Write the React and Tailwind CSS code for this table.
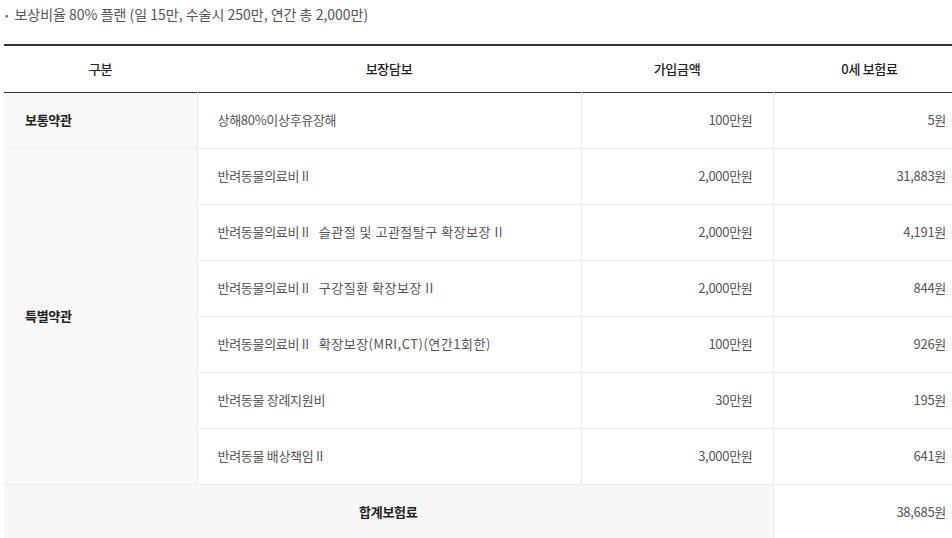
export default function App() {
  const rows = [
    ["반려동물의료비 II", "", "2,000만원", "31,883원"],
    ["반려동물의료비 II", "슬관절 및 고관절탈구 확장보장 II", "2,000만원", "4,191원"],
    ["반려동물의료비 II", "구강질환 확장보장 II", "2,000만원", "844원"],
    ["반려동물의료비 II", "확장보장(MRI,CT)(연간1회한)", "100만원", "926원"],
    ["반려동물 장례지원비", "", "30만원", "195원"],
    ["반려동물 배상책임 II", "", "3,000만원", "641원"],
  ];
  const font = { fontFamily: '"Noto Sans CJK KR", "Noto Sans", sans-serif' };
  return (
    <div className="w-[952px] h-[538px] overflow-hidden bg-white" style={font}>
      <div className="flex items-center h-[28px] pl-[5px] text-[14px] text-[#555]">
        <span className="mr-[6px] text-[10px] text-[#666]">•</span>
        <span>보상비율 80% 플랜 (일 15만, 수술시 250만, 연간 총 2,000만)</span>
      </div>
      <div className="h-[16px]" />
      <table className="ml-[4px] w-[962px] border-collapse table-fixed text-[13px] tracking-[-0.3px]">
        <colgroup>
          <col className="w-[193px]" />
          <col className="w-[384px]" />
          <col className="w-[192px]" />
          <col className="w-[193px]" />
        </colgroup>
        <thead>
          <tr className="h-[47px] border-t-2 border-t-[#333] border-b border-b-[#333]">
            <th className="font-medium text-[#222] text-center">구분</th>
            <th className="font-medium text-[#222] text-center">보장담보</th>
            <th className="font-medium text-[#222] text-center">가입금액</th>
            <th className="font-medium text-[#222] text-center">0세 보험료</th>
          </tr>
        </thead>
        <tbody>
          <tr className="h-[56px] border-b border-b-[#eee]">
            <td className="bg-[#f8f8f8] pl-[21px] font-bold text-[#222] border-r border-r-[#eee]">보통약관</td>
            <td className="pl-[20px] text-[#555] border-r border-r-[#eee]">상해80%이상후유장해</td>
            <td className="pr-[20px] text-right text-[#555] border-r border-r-[#eee]">100만원</td>
            <td className="pr-[20px] text-right text-[#555]">5원</td>
          </tr>
          {rows.map((r, i) => (
            <tr key={i} className="h-[56px] border-b border-b-[#eee]">
              {i === 0 && (
                <td rowSpan={6} className="bg-[#f8f8f8] pl-[21px] font-bold text-[#222] border-r border-r-[#eee] align-middle">
                  특별약관
                </td>
              )}
              <td className="pl-[20px] text-[#555] border-r border-r-[#eee] whitespace-nowrap">
                <span>{r[0]}</span>
                {r[1] && <span className="ml-[10px] tracking-[0.5px]">{r[1]}</span>}
              </td>
              <td className="pr-[20px] text-right text-[#555] border-r border-r-[#eee]">{r[2]}</td>
              <td className="pr-[20px] text-right text-[#555]">{r[3]}</td>
            </tr>
          ))}
          <tr className="h-[56px] border-b border-b-[#eee]">
            <td colSpan={3} className="bg-[#f7f7f7] text-center font-bold text-[#222] border-r border-r-[#eee]">합계보험료</td>
            <td className="pr-[20px] text-right text-[#555]">38,685원</td>
          </tr>
        </tbody>
      </table>
    </div>
  );
}
